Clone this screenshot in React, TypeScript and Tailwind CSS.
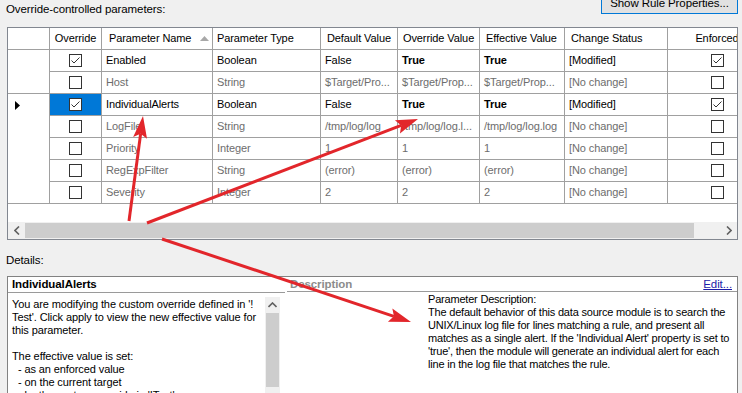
import React from "react";

const COLS =
  "grid grid-cols-[42px_52px_111px_108px_77px_82px_85px_103px_98px]";

function Check({ checked }: { checked: boolean }) {
  return (
    <span className="inline-flex h-[13px] w-[13px] items-center justify-center border border-[#333333] bg-white">
      {checked && (
        <svg width="11" height="11" viewBox="0 0 11 11">
          <path d="M1.5 5.5 L4 8 L9.5 2.5" fill="none" stroke="#333333" strokeWidth="1" />
        </svg>
      )}
    </span>
  );
}

type Row = {
  name: string;
  type: string;
  def: string;
  ov: string;
  eff: string;
  status: string;
  on: boolean;
  sel?: boolean;
};

const rows: Row[] = [
  { name: "Enabled", type: "Boolean", def: "False", ov: "True", eff: "True", status: "[Modified]", on: true },
  { name: "Host", type: "String", def: "$Target/Pro...", ov: "$Target/Prop...", eff: "$Target/Prop...", status: "[No change]", on: false },
  { name: "IndividualAlerts", type: "Boolean", def: "False", ov: "True", eff: "True", status: "[Modified]", on: true, sel: true },
  { name: "LogFile", type: "String", def: "/tmp/log/log", ov: "/tmp/log/log.l...", eff: "/tmp/log/log.log", status: "[No change]", on: false },
  { name: "Priority", type: "Integer", def: "1", ov: "1", eff: "1", status: "[No change]", on: false },
  { name: "RegExpFilter", type: "String", def: "(error)", ov: "(error)", eff: "(error)", status: "[No change]", on: false },
  { name: "Severity", type: "Integer", def: "2", ov: "2", eff: "2", status: "[No change]", on: false },
];

function Arrow({ x1, y1, x2, y2 }: { x1: number; y1: number; x2: number; y2: number }) {
  const dx = x2 - x1;
  const dy = y2 - y1;
  const len = Math.sqrt(dx * dx + dy * dy);
  const ux = dx / len;
  const uy = dy / len;
  const hl = 22;
  const hw = 7;
  const bx = x2 - ux * hl;
  const by = y2 - uy * hl;
  const px = -uy;
  const py = ux;
  const pts = `${x2},${y2} ${bx + px * hw},${by + py * hw} ${bx + ux * 4},${by + uy * 4} ${bx - px * hw},${by - py * hw}`;
  return (
    <g>
      <line x1={x1} y1={y1} x2={bx + ux * 4} y2={by + uy * 4} stroke="#e2262b" strokeWidth="3" />
      <polygon points={pts} fill="#e2262b" />
    </g>
  );
}

export default function App() {
  return (
    <div className="relative h-[393px] w-[742px] overflow-hidden bg-[#f0f0f0] font-['Liberation_Sans',Arial,sans-serif] text-[11px] tracking-[-0.1px] text-black">
      <div className="flex h-[27px] items-start justify-between pl-[6px] pr-[4px]">
        <span className="mt-[2px] text-[11.5px] leading-[14px]">Override-controlled parameters:</span>
        <button className="-mt-[8px] flex h-[22px] w-[137px] items-center justify-center border border-[#0078d7] bg-[#e1e1e1] text-[11.5px] leading-[14px] text-black">
          Show Rule Properties...
        </button>
      </div>

      <div className="ml-[7px] flex h-[213px] w-[731px] flex-col overflow-hidden border border-[#828790] bg-white">
        <div className={`${COLS} h-[22px] shrink-0 whitespace-nowrap`}>
          <div className="border-b border-r border-[#a0a0a0]" />
          <div className="flex items-center justify-center border-b border-r border-[#a0a0a0]">Override</div>
          <div className="flex items-center justify-between border-b border-r border-[#a0a0a0] pl-[7px] pr-[3px]">
            <span>Parameter Name</span>
            <svg width="9" height="5" viewBox="0 0 9 5">
              <path d="M0 5 L4.5 0 L9 5 Z" fill="#a8a8a8" />
            </svg>
          </div>
          <div className="flex items-center border-b border-r border-[#a0a0a0] pl-[4px]">Parameter Type</div>
          <div className="flex items-center overflow-hidden border-b border-r border-[#a0a0a0] pl-[6px]">Default Value</div>
          <div className="flex items-center overflow-hidden border-b border-r border-[#a0a0a0] pl-[5px]">Override Value</div>
          <div className="flex items-center overflow-hidden border-b border-r border-[#a0a0a0] pl-[6px]">Effective Value</div>
          <div className="flex items-center border-b border-r border-[#a0a0a0] pl-[6px]">Change Status</div>
          <div className="flex items-center justify-center border-b border-[#a0a0a0]">Enforced</div>
        </div>

        {rows.map((r, i) => {
          const txt = r.on ? "text-black" : "text-[#6d6d6d]";
          const last = i === rows.length - 1;
          const headBorder = last ? "border-b border-[#a0a0a0]" : "";
          const headTop = r.sel ? "border-t border-[#a0a0a0] -mt-px" : "";
          const cell = "flex items-center overflow-hidden whitespace-nowrap border-b border-r border-[#a0a0a0] pl-[4px]";
          return (
            <div key={r.name} className={`${COLS} h-[22px] shrink-0`}>
              <div className={`flex items-center border-r border-[#a0a0a0] pl-[7px] ${headBorder} ${headTop}`}>
                {r.sel && (
                  <svg width="5" height="9" viewBox="0 0 5 9">
                    <path d="M0 0 L5 4.5 L0 9 Z" fill="#000000" />
                  </svg>
                )}
              </div>
              <div className={`flex items-center justify-center border-b border-r border-[#a0a0a0] ${r.sel ? "bg-[#0078d7]" : ""}`}>
                <Check checked={r.on} />
              </div>
              <div className={`${cell} ${txt}`}>{r.name}</div>
              <div className={`${cell} ${txt}`}>{r.type}</div>
              <div className={`${cell} ${txt} pl-[3px]`}>{r.def}</div>
              <div className={`${cell} ${txt} pl-[3px] ${r.on ? "font-bold" : ""}`}>{r.ov}</div>
              <div className={`${cell} ${txt} pl-[3px] ${r.on ? "font-bold" : ""}`}>{r.eff}</div>
              <div className={`${cell} ${txt}`}>{r.status}</div>
              <div className="flex items-center justify-center border-b border-[#a0a0a0]">
                <Check checked={r.on} />
              </div>
            </div>
          );
        })}

        <div className="flex-1" />

        <div className="flex h-[17px] shrink-0 items-stretch bg-[#f0f0f0]">
          <div className="flex w-[17px] items-center justify-center text-[#606060]">
            <svg width="6" height="9" viewBox="0 0 6 9">
              <path d="M5 0.5 L1 4.5 L5 8.5" fill="none" stroke="#606060" strokeWidth="1.6" />
            </svg>
          </div>
          <div className="my-[1px] w-[669px] bg-[#cdcdcd]" />
          <div className="flex-1" />
          <div className="flex w-[17px] items-center justify-center">
            <svg width="6" height="9" viewBox="0 0 6 9">
              <path d="M1 0.5 L5 4.5 L1 8.5" fill="none" stroke="#606060" strokeWidth="1.6" />
            </svg>
          </div>
        </div>
      </div>

      <div className="pb-[9px] pl-[6px] pt-[13px] text-[11.5px] leading-[14px]">Details:</div>

      <div className="ml-[7px] flex h-[130px] w-[731px] border border-[#828282] bg-white">
        <div className="flex w-[277px] shrink-0 flex-col">
          <div className="flex h-[16px] items-center border-b border-[#9a9a9a] pl-[4px] text-[11.5px] font-bold leading-[15px]">
            IndividualAlerts
          </div>
          <div className="flex">
            <div className="w-[257px] shrink-0 overflow-hidden whitespace-pre pl-[4px] pt-[5px] leading-[13px] tracking-[-0.1px]">
              {"You are modifying the custom override defined in '!\nTest'. Click apply to view the new effective value for\nthis parameter.\n\nThe effective value is set:\n  - as an enforced value\n  - on the current target\n  - by the custom override in '!Test'"}
            </div>
            <div className="mt-[4px] flex w-[15px] shrink-0 flex-col bg-[#f0f0f0]">
              <div className="flex h-[16px] items-center justify-center">
                <svg width="9" height="6" viewBox="0 0 9 6">
                  <path d="M0.5 5 L4.5 1 L8.5 5" fill="none" stroke="#606060" strokeWidth="1.6" />
                </svg>
              </div>
              <div className="mx-[1px] h-[74px] bg-[#cdcdcd]" />
            </div>
          </div>
        </div>
        <div className="flex min-w-0 flex-1 flex-col overflow-hidden">
          <div className="ml-[2px] flex h-[15px] items-center justify-between border-b border-[#9a9a9a] pl-[3px] pr-[5px] leading-[14px]">
            <span className="text-[11.5px] font-bold text-[#8c8c8c]">Description</span>
            <span className="text-[11.5px] text-[#1c1ca8] underline">Edit...</span>
          </div>
          <div className="whitespace-nowrap pl-[143px] pt-[1px] leading-[13px] tracking-[-0.2px]">
            Parameter Description:
            <br />
            The default behavior of this data source module is to search the
            <br />
            UNIX/Linux log file for lines matching a rule, and present all
            <br />
            matches as a single alert. If the 'Individual Alert' property is set to
            <br />
            'true', then the module will generate an individual alert for each
            <br />
            line in the log file that matches the rule.
          </div>
        </div>
      </div>

      <svg className="pointer-events-none absolute left-0 top-0" width="742" height="393">
        <Arrow x1={129} y1={221} x2={143} y2={116} />
        <Arrow x1={147} y1={223} x2={418} y2={119} />
        <Arrow x1={162} y1={239} x2={411} y2={322} />
      </svg>
    </div>
  );
}
